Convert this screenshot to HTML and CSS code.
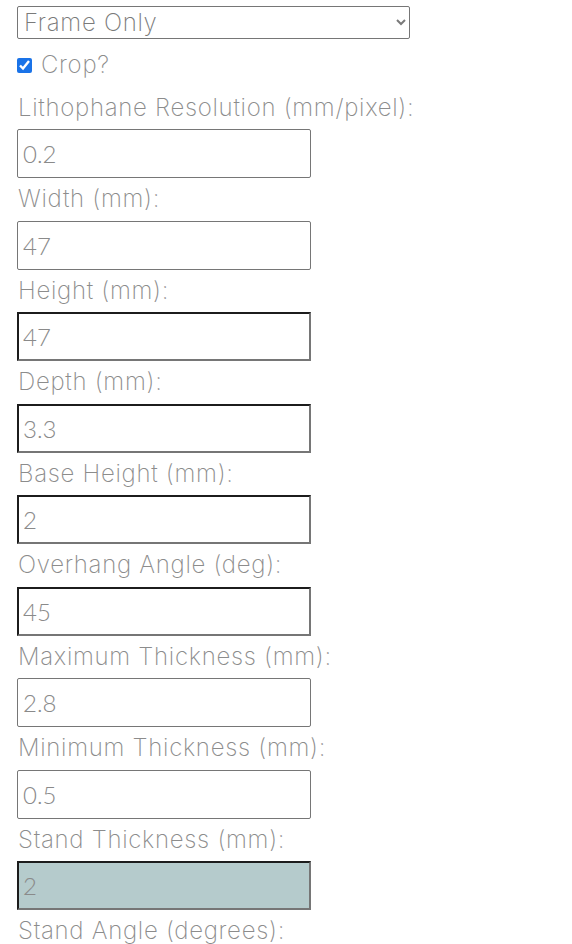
FILE: index.html
```html
<!DOCTYPE html>
<html>
<head>
<meta charset="utf-8">
<link rel="stylesheet" href="styles.css">
</head>
<body>
<form class="form">
  <select class="select">
    <option>Frame Only</option>
  </select>
  <label class="check-row"><input type="checkbox" class="check" checked> Crop?</label>
  <label class="label">Lithophane Resolution (mm/pixel):</label>
  <input class="field" type="text" value="0.2">
  <label class="label">Width (mm):</label>
  <input class="field" type="text" value="47">
  <label class="label">Height (mm):</label>
  <input class="field inset" type="text" value="47">
  <label class="label">Depth (mm):</label>
  <input class="field inset" type="text" value="3.3">
  <label class="label">Base Height (mm):</label>
  <input class="field inset" type="text" value="2">
  <label class="label">Overhang Angle (deg):</label>
  <input class="field inset" type="text" value="45">
  <label class="label">Maximum Thickness (mm):</label>
  <input class="field" type="text" value="2.8">
  <label class="label">Minimum Thickness (mm):</label>
  <input class="field" type="text" value="0.5">
  <label class="label">Stand Thickness (mm):</label>
  <input class="field inset shaded" type="text" value="2">
  <label class="label">Stand Angle (degrees):</label>
  <input class="field inset" type="text" value="">
</form>
</body>
</html>
```
FILE: styles.css
```css
html, body {
  margin: 0;
  padding: 0;
  background: #ffffff;
}
body {
  font-family: Inter, "Open Sans", sans-serif;
  font-weight: 200;
  color: #8c8c8c;
}
.form {
  display: flex;
  flex-direction: column;
  align-items: flex-start;
  padding: 6px 0 0 17px;
}
.select {
  width: 393px;
  height: 33px;
  box-sizing: border-box;
  border: 1px solid #767676;
  border-radius: 2px;
  background: #fff;
  font-family: Inter, sans-serif;
  font-weight: 200;
  font-size: 24px;
  letter-spacing: 0.7px;
  color: #7a7a7a;
  padding: 0 0 0 2px;
  margin: 0;
}
.check-row {
  display: flex;
  align-items: center;
  gap: 9px;
  font-size: 24px;
  letter-spacing: 0.7px;
  line-height: 42.5px;
  margin-top: 5px;
}
.check {
  width: 15px;
  height: 15px;
  margin: 0;
  accent-color: #1a73e8;
}
.label {
  display: block;
  font-size: 24px;
  letter-spacing: 0.7px;
  line-height: 42.5px;
  padding-left: 1px;
  white-space: nowrap;
}
.field {
  width: 294px;
  height: 49px;
  box-sizing: border-box;
  margin: 0;
  border: 1px solid #767676;
  border-radius: 2px;
  padding: 0 0 0 5px;
  font-family: Lato, sans-serif;
  font-weight: 300;
  font-size: 24px;
  color: #8a8a8a;
  background: #fff;
}
.inset {
  border-radius: 0;
  border-width: 2px;
  border-style: solid;
  border-color: #1c1c1c #767676 #767676 #1c1c1c;
  padding-left: 4px;
}
.shaded {
  background: #b5cbcc;
}
```
